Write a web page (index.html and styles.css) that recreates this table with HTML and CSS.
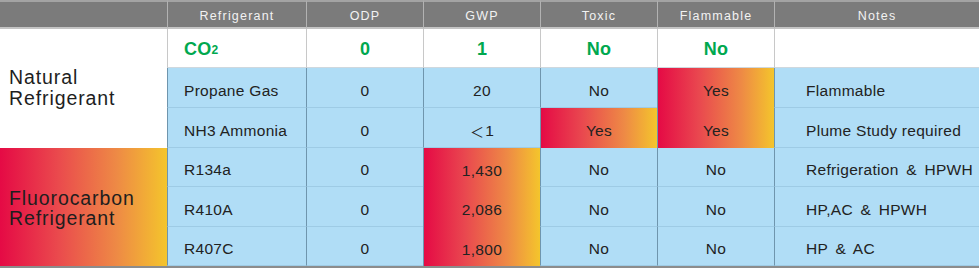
FILE: index.html
```html
<!DOCTYPE html>
<html lang="en">
<head>
<meta charset="utf-8">
<title>Refrigerant comparison</title>
<link rel="stylesheet" href="styles.css">
</head>
<body>
<div class="table">
  <div class="hd hd-first"></div>
  <div class="hd">Refrigerant</div>
  <div class="hd">ODP</div>
  <div class="hd">GWP</div>
  <div class="hd">Toxic</div>
  <div class="hd">Flammable</div>
  <div class="hd">Notes</div>

  <div class="group natural">Natural<br>Refrigerant</div>
  <div class="c w name green">CO<span class="sub">2</span></div>
  <div class="c w green">0</div>
  <div class="c w green">1</div>
  <div class="c w green">No</div>
  <div class="c w green">No</div>
  <div class="c w note"></div>

  <div class="c b name">Propane Gas</div>
  <div class="c b">0</div>
  <div class="c b">20</div>
  <div class="c b">No</div>
  <div class="c g">Yes</div>
  <div class="c b note">Flammable</div>

  <div class="c b name">NH3 Ammonia</div>
  <div class="c b">0</div>
  <div class="c b"><span class="lt">＜</span>1</div>
  <div class="c g">Yes</div>
  <div class="c g">Yes</div>
  <div class="c b note">Plume Study required</div>

  <div class="group fluoro">Fluorocarbon<br>Refrigerant</div>
  <div class="c b name">R134a</div>
  <div class="c b">0</div>
  <div class="c g">1,430</div>
  <div class="c b">No</div>
  <div class="c b">No</div>
  <div class="c b note spaced">Refrigeration &amp; HPWH</div>

  <div class="c b name">R410A</div>
  <div class="c b">0</div>
  <div class="c g">2,086</div>
  <div class="c b">No</div>
  <div class="c b">No</div>
  <div class="c b note spaced">HP,AC &amp; HPWH</div>

  <div class="c b name">R407C</div>
  <div class="c b">0</div>
  <div class="c g">1,800</div>
  <div class="c b">No</div>
  <div class="c b">No</div>
  <div class="c b note spaced">HP &amp; AC</div>
</div>
</body>
</html>
```

FILE: styles.css
```css
html, body {
  margin: 0;
  padding: 0;
  background: #ffffff;
}

body {
  width: 979px;
  height: 268px;
  overflow: hidden;
  font-family: "Liberation Sans", Arial, sans-serif;
  color: #222222;
}

.table {
  display: grid;
  grid-template-columns: 167px 139px 117px 117px 117px 117px 205px;
  grid-template-rows: 29px 39px 40px 40px 39px 40px 39px;
  border-bottom: 2px solid #8c8c8c;
}

.hd {
  background: #7b7b7b;
  border-top: 2px solid #a3a3a3;
  border-bottom: 2px solid #c4c4c4;
  border-left: 1px solid #b2b2b2;
  color: #f2f2f2;
  font-size: 12.5px;
  letter-spacing: 1.2px;
  display: flex;
  align-items: center;
  justify-content: center;
  padding-top: 2px;
}

.hd-first {
  border-left: none;
}

.group {
  grid-column: 1;
  display: flex;
  align-items: center;
  padding-left: 9px;
  font-size: 19.5px;
  line-height: 20.5px;
  letter-spacing: 0.9px;
  color: #1e1e1e;
}

.natural {
  grid-row: 2 / span 3;
  background: #ffffff;
  padding-bottom: 2px;
}

.fluoro {
  grid-row: 5 / span 3;
  background: linear-gradient(90deg, #e50a45 0%, #ea4a4d 35%, #ee8a45 70%, #f4c52c 100%);
  padding-top: 2px;
}

.c {
  display: flex;
  align-items: center;
  justify-content: center;
  font-size: 15.5px;
  letter-spacing: 0.3px;
  padding-top: 6px;
}

.w {
  background: #ffffff;
  border-left: 1px solid #c8c8c8;
  border-bottom: 1px solid #cfd8de;
  padding-top: 2px;
}

.b {
  background: #b0ddf6;
  border-left: 1px solid #6f95ad;
  border-bottom: 1px solid #9ecbe5;
}

.g {
  background: linear-gradient(90deg, #e50a45 0%, #e9474f 35%, #ee8a45 72%, #f4c52c 100%);
  border-left: 1px solid #6f95ad;
}

.name {
  justify-content: flex-start;
  padding-left: 16px;
}

.note {
  justify-content: flex-start;
  padding-left: 31px;
}

.spaced {
  word-spacing: 3px;
}

.lt {
  font-family: "Noto Sans CJK JP", sans-serif;
  font-size: 14px;
  margin-right: 1px;
}

.green {
  color: #00a84f;
  font-weight: bold;
  font-size: 18px;
  letter-spacing: 0.2px;
}

.sub {
  font-size: 12px;
  position: relative;
  top: 1px;
}
```
